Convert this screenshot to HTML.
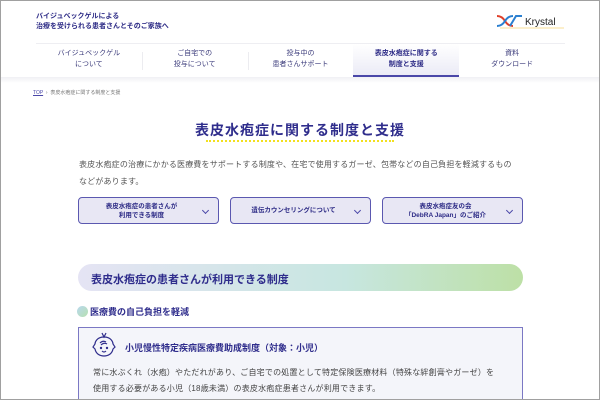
<!DOCTYPE html>
<html><head><meta charset="utf-8"><style>
*{margin:0;padding:0;box-sizing:border-box}
html,body{width:600px;height:400px;overflow:hidden}
body{background:#fff;font-family:"Liberation Sans","Noto Sans CJK JP",sans-serif;position:relative}
.frame{position:absolute;left:0;top:0;width:600px;height:400px;border:1px solid #a0a0a0;z-index:10;pointer-events:none}
.a{position:absolute}
.hd{left:36px;top:12px;font-size:7px;line-height:10px;color:#2d2b86;font-weight:bold}
.nav{left:36px;top:43px;width:529px;height:34px;display:flex;border-top:1px solid #eeeef2}
.nav div{flex:1;text-align:center;font-size:7px;line-height:11px;color:#3a3a7a;padding-top:4px;position:relative}
.nav div+div:before{content:"";position:absolute;left:0;top:8px;height:18px;border-left:1px solid #ececf0}
.nav .on{background:linear-gradient(#fff,#ebebf6);border-bottom:2px solid #4a47a8;font-weight:bold;color:#2d2b86}
.nav .on:before,.nav .on+div:before{display:none}
.shadow{left:0;top:77px;width:600px;height:6px;background:linear-gradient(#f0f0f4,#fff)}
.bc{left:33px;top:89px;font-size:5px;color:#777}
.bc u{color:#4a47a8}
.title{left:0;width:600px;top:120px;text-align:center;font-size:14px;font-weight:bold;color:#2f2d8c;letter-spacing:1px}
.dot{left:206px;top:140px;width:188px;border-top:2px dotted #f2e020}
.p{left:79px;top:156px;width:446px;font-size:8px;letter-spacing:.17px;line-height:17px;color:#555}
.btn{top:197px;height:27px;border:1.5px solid #5b58b0;border-radius:4px;background:#e8e7f4;font-size:6.5px;line-height:9px;font-weight:bold;color:#2d2b86;display:flex;align-items:center;justify-content:center;text-align:center;padding-right:14px}
.btn:after{content:"";position:absolute;right:10px;top:10px;width:4px;height:4px;border-right:1.2px solid #4a47a8;border-bottom:1.2px solid #4a47a8;transform:rotate(45deg)}
.band{left:78px;top:264px;width:445px;height:27px;border-radius:14px;background:linear-gradient(90deg,#e5e4f4,#c7e6e0 60%,#bde0a6);font-size:11px;font-weight:bold;color:#2f2d8c;padding:7px 0 0 13px}
.sub{left:77px;top:305px;font-size:9px;font-weight:bold;color:#2f2d8c}
.sub i{display:inline-block;width:11px;height:11px;border-radius:50%;background:linear-gradient(135deg,#b8d8ee,#b7e0b0);vertical-align:-2px;margin-right:2px}
.box{left:78px;top:327px;width:445px;height:80px;border:1.5px solid #7b78c4;background:#f4f5fa}
.bt{left:125px;top:341px;font-size:9px;font-weight:bold;color:#2f2d8c}
.bx{left:93px;top:365px;width:418px;font-size:8px;letter-spacing:.2px;line-height:16px;color:#444}
</style></head><body>
<div class="frame"></div>
<div class="a hd">バイジュベックゲルによる<br>治療を受けられる患者さんとそのご家族へ</div>
<div class="a" style="left:496px;top:13px">
<svg width="70" height="16" viewBox="0 0 70 16"><path d="M1 3 Q6 3 9 8 T17 13" stroke="#e0402a" stroke-width="2" fill="none"/><path d="M1 13 Q6 13 9 8 T17 3" stroke="#2a7fd0" stroke-width="2" fill="none"/><path d="M14 13 L20 3 L26 3" stroke="#2a7fd0" stroke-width="2" fill="none"/><path d="M4 15 H68" stroke="#f2c030" stroke-width="0.6"/><text x="29" y="12" font-family="Liberation Sans" font-size="10" fill="#222">Krystal</text></svg></div>
<div class="a nav"><div>バイジュベックゲル<br>について</div><div>ご自宅での<br>投与について</div><div>投与中の<br>患者さんサポート</div><div class="on">表皮水疱症に関する<br>制度と支援</div><div>資料<br>ダウンロード</div></div>
<div class="a shadow"></div>
<div class="a bc"><u>TOP</u> &nbsp;›&nbsp; 表皮水疱症に関する制度と支援</div>
<div class="a title">表皮水疱症に関する制度と支援</div>
<div class="a dot"></div>
<div class="a p">表皮水疱症の治療にかかる医療費をサポートする制度や、在宅で使用するガーゼ、包帯などの自己負担を軽減するもの<br>などがあります。</div>
<div class="a btn" style="left:78px;width:141px">表皮水疱症の患者さんが<br>利用できる制度</div>
<div class="a btn" style="left:230px;width:141px">遺伝カウンセリングについて</div>
<div class="a btn" style="left:382px;width:141px">表皮水疱症友の会<br>「DebRA Japan」のご紹介</div>
<div class="a band">表皮水疱症の患者さんが利用できる制度</div>
<div class="a sub"><i></i>医療費の自己負担を軽減</div>
<div class="a box"></div>
<svg class="a" style="left:92px;top:332px" width="24" height="26" viewBox="0 0 24 26" fill="none" stroke="#2f2d8c" stroke-width="1.2"><path d="M12 5 C5 5 3 10 3 12 L1 15 L3 17 C4 22 8 24 12 24 C16 24 20 22 21 17 L23 15 L21 12 C21 10 19 5 12 5Z"/><path d="M10 1 L12 5 L14 1"/><path d="M8 11 Q11 8 14 10 M9 13 Q12 10 15 12"/><circle cx="9" cy="16" r="0.6" fill="#2f2d8c"/><circle cx="15" cy="16" r="0.6" fill="#2f2d8c"/><path d="M10 19 Q12 21 14 19"/></svg>
<div class="a bt">小児慢性特定疾病医療費助成制度（対象：小児）</div>
<div class="a bx">常に水ぶくれ（水疱）やただれがあり、ご自宅での処置として特定保険医療材料（特殊な絆創膏やガーゼ）を<br>使用する必要がある小児（18歳未満）の表皮水疱症患者さんが利用できます。</div>
</body></html>
